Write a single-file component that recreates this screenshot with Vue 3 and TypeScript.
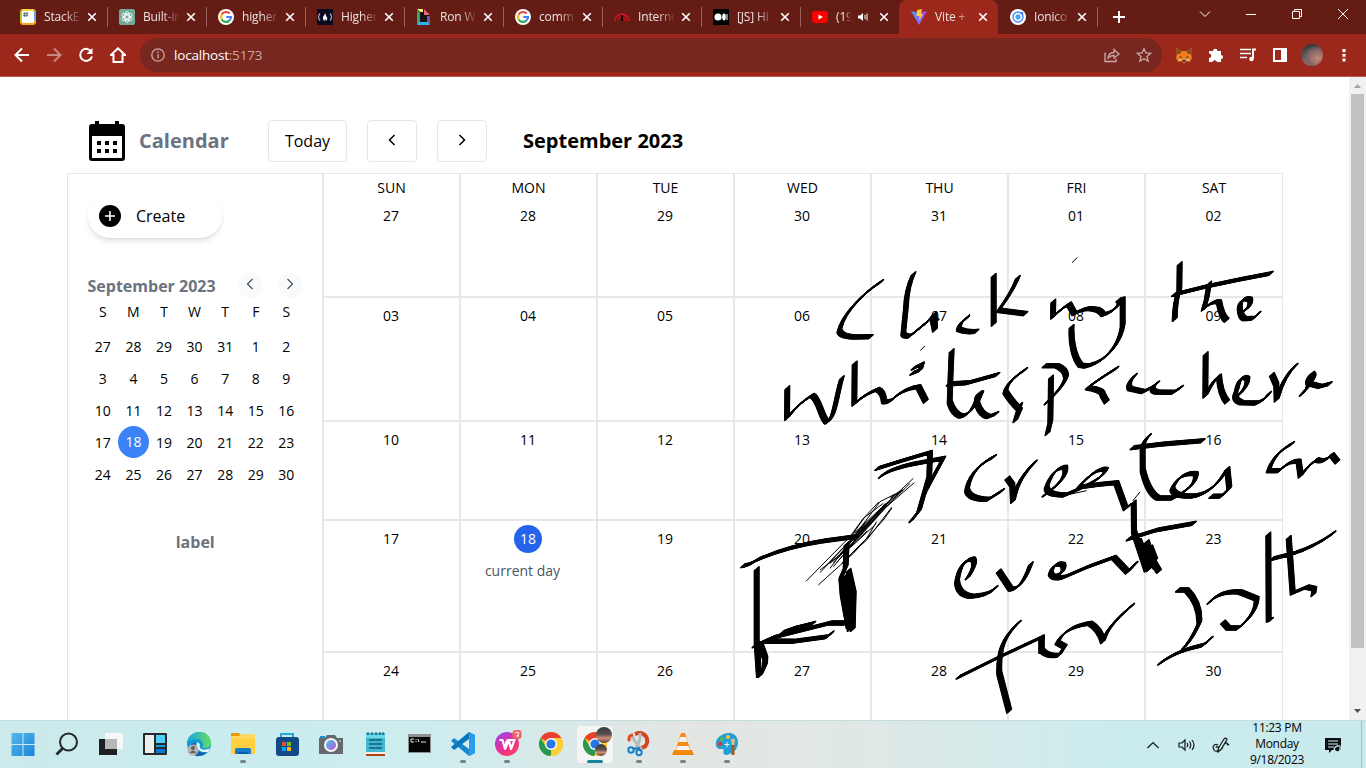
<script setup lang="ts">
interface Tab {
  title: string
  icon: string
  active?: boolean
  audio?: boolean
}

interface InkGroup {
  x: number
  y: number
  broad: string
  fine: string
}

const tabs: Tab[] = [
  { title: 'StackE', icon: 'stack' },
  { title: 'Built-in', icon: 'gpt' },
  { title: 'higher', icon: 'google' },
  { title: 'Higher', icon: 'fcc' },
  { title: 'Ron W', icon: 'ron' },
  { title: 'comm', icon: 'google' },
  { title: 'Interne', icon: 'speed' },
  { title: '[JS] Hi', icon: 'medium' },
  { title: '(19', icon: 'youtube', audio: true },
  { title: 'Vite +', icon: 'vite', active: true },
  { title: 'Ionico', icon: 'ionic' },
]

const weekdays = ['SUN', 'MON', 'TUE', 'WED', 'THU', 'FRI', 'SAT']
const weeks: string[][] = [
  ['27', '28', '29', '30', '31', '01', '02'],
  ['03', '04', '05', '06', '07', '08', '09'],
  ['10', '11', '12', '13', '14', '15', '16'],
  ['17', '18', '19', '20', '21', '22', '23'],
  ['24', '25', '26', '27', '28', '29', '30'],
]
const initials = ['S', 'M', 'T', 'W', 'T', 'F', 'S']
const short = (day: string) => String(Number(day))

// Pen strokes are kept at three units per pixel, relative to each group's origin.
const ink: InkGroup[] = [
  {
    x: 740, y: 240,
    broad: 'M425 124C380 152 310 215 298 272Q302 290 345 291L394 290 M521 100Q500 145 498 200L490 280Q492 290 510 288L566 242L583 222L585 270L578 235L591 245 M683 232Q655 250 657 268Q680 278 711 274 M761 105L761 254 M834 111Q820 150 776 211L858 221 M142 442L141 535Q175 490 216 466C238 475 245 540 262 546C285 535 290 460 306 412 M344 368L343 492Q370 465 412 448Q430 455 432 484Q440 488 455 480Q490 445 535 440L558 485 M519 385L546 372L541 390L515 400 M635 331L632 400L629 486Q640 520 662 528Q690 528 710 480Q712 455 724 459L711 490Q722 525 746 530L771 520 M624 432L685 428L774 403 M857 388Q800 425 796 455Q810 480 840 510L826 542L841 492',
    fine: 'M541 331L555 318 M690 222L665 245',
  },
  {
    x: 1040, y: 240,
    broad: 'M40 182L39 231Q65 205 87 192L103 221Q140 200 165 208Q180 210 190 224Q225 215 240 186L235 180L248 177L248 256C240 310 200 365 140 378L122 376C100 350 92 300 95 258 M419 70L418 150Q405 180 404 240 M400 164L500 139L600 118L694 100 M508 128L500 175L491 207Q520 180 537 186Q545 230 561 242 M612 212Q635 200 630 178Q603 170 599 200Q600 230 614 236L640 235L657 219 M12 377L50 377Q80 390 78 412Q70 440 18 490 M33 410L31 545L22 582 M231 384Q180 415 143 443Q190 450 188 465L201 487 M286 405Q260 430 270 446L310 455Q335 445 352 429Q325 450 350 456L400 457L425 441 M497 340L496 468Q520 420 537 408Q540 460 562 487 M590 470Q625 440 622 416Q600 400 590 450Q576 478 605 488L650 489Q675 480 688 459 M695 402L709 434L710 480Q730 410 768 375 M803 438Q830 410 816 400Q800 415 806 430L840 439L871 431 M805 440L784 464',
    fine: 'M96 68L112 53',
  },
  {
    x: 730, y: 430,
    broad: 'M440 116Q520 90 600 67L598 135L567 243L543 273 M451 140Q480 115 560 100L640 85L588 180 M38 407Q60 405 80 390Q170 350 280 333L375 320 M80 415L80 635L87 738 M350 340L347 410L334 440L338 490L356 590L370 590 M355 420L371 490L368 600M347 435L361 535L359 600 M72 648L130 622L300 579L350 579 M105 633L190 634L292 620L306 608 M155 608L190 595L250 580L180 606 M90 640L106 685L105 705L90 738 M794 79Q720 115 711 180Q718 208 775 208L818 181 M831 143L847 165L849 214Q860 150 916 95 M712 445Q742 400 728 387Q690 390 681 455Q685 495 725 499Q780 495 798 472 M805 422L842 477Q875 480 903 400 M868 576C820 620 805 660 808 730L838 845 M684 742L810 680L936 621L934 666',
    fine: 'M228 454L345 335L550 145 M265 465L370 370L460 270L486 234 M270 428L400 290L553 158 M300 415L450 215L520 180 M345 350L485 215L540 160 M370 310Q400 260 446 216 M335 400L410 325L440 275 M365 330L475 215 M370 335L450 240L518 180 M375 310L480 215 M270 420L350 360L470 225 M290 405L390 300 M300 400L380 330L510 185 M310 410L420 280 M350 385L410 330L485 232 M360 320L400 265L460 220 M640 90L568 230 M378 318L470 222 M382 324L472 226 M372 326L466 220 M360 338L440 262 M352 348L400 296 M330 372L380 318 M310 398L350 350 M320 398L372 338 M350 330L384 320 M345 345L384 322 M480 205L518 180 M484 200L512 184 M362 352L436 284 M340 372L412 302 M322 386L396 308',
  },
  {
    x: 1040, y: 430,
    broad: 'M12 196Q85 145 75 112Q40 112 20 170Q18 195 75 195L110 180Q190 145 198 119Q170 110 115 172L180 163L229 158L257 236L268 226 M328 16Q305 40 308 60L308 120Q325 190 355 204L400 204Q474 165 467 131Q420 125 397 175Q400 200 460 198Q520 190 562 116L568 175L545 198L512 199 M276 53L370 42L490 32 M758 40Q700 70 686 122L718 122Q750 90 776 94L782 138Q800 110 830 89Q850 100 875 74L893 97 M281 215L282 305L320 420L320 335L345 410L322 360L309 350L318 400L345 390L325 420 M296 330L322 395 M330 350L346 392 M310 345L357 424L330 385 M264 327L350 300L463 280 M40 440Q78 430 69 404Q40 395 32 430Q38 448 70 442L145 410L221 382L263 426L288 399 M3 620L5 660Q20 680 57 676L74 650L52 638Q75 590 150 580Q180 598 189 635Q200 590 278 525 M412 480L440 480Q480 520 478 578Q455 630 430 655 M359 700Q400 670 450 655L490 645L514 624 M507 518Q540 480 600 486L650 506Q650 550 595 594L565 594L548 575 M685 311L686 570L695 568 M694 387L760 370Q825 350 882 308 M746 321L758 489L800 471L823 476L820 495',
    fine: 'M300 186L278 213 M70 197L140 182',
  },
]
// The pen tip is a slanted nib: each broad stroke is swept along these offsets.
const nib = Array.from({ length: 15 }, (_, i) => (i - 7) * 0.44)

const running = [5, 10, 11, 14, 15, 16]
const apps = ['start', 'search', 'tasks', 'widgets', 'edge', 'files', 'store', 'camera', 'notepad', 'terminal', 'code', 'wps', 'chrome', 'chrome2', 'snip', 'vlc', 'paint']
</script>

<template>
  <div class="screen">
    <header class="strip">
      <div v-for="(tab, i) in tabs" :key="i" class="tab" :class="{ active: tab.active, before: i === 8 }">
        <svg class="fav" viewBox="0 0 16 16">
          <g v-if="tab.icon === 'stack'">
            <rect width="16" height="16" rx="3" fill="#f5a31a" /><path d="M0 3V12L3 10V3Z" fill="#a7d320" /><path d="M13 2H16V11L13 12Z" fill="#68a9ef" /><path d="M2 0H14L12 3H3Z" fill="#f3d648" />
            <rect x="2" y="2" width="12" height="12" rx="1" fill="#fff" /><path d="M5 3L4.300 8M7.300 3L6.600 8M3 4.600H8.300M2.900 6.600H8" stroke="#555" stroke-width=".8" />
          </g>
          <g v-else-if="tab.icon === 'gpt'">
            <rect width="16" height="16" rx="2" fill="#74aa9c" />
            <g fill="none" stroke="#fff" stroke-width=".8"><ellipse v-for="a in 3" :key="a" cx="8" cy="8" rx="2.600" ry="5.500" :transform="`rotate(${a * 60} 8 8)`" /><circle cx="8" cy="8" r="2" /></g>
          </g>
          <g v-else-if="tab.icon === 'google'">
            <circle cx="8" cy="8" r="8" fill="#fff" />
            <g fill="none" stroke-width="2.200"><path d="M11.700 4.600A5 5 0 0 0 3.700 5.500" stroke="#ea4335" /><path d="M3.700 5.500A5 5 0 0 0 3.700 10.500" stroke="#fbbc05" /><path d="M3.700 10.500A5 5 0 0 0 11.300 11.700" stroke="#34a853" /><path d="M11.300 11.700A5 5 0 0 0 13 8H8.200" stroke="#4285f4" /></g>
          </g>
          <g v-else-if="tab.icon === 'fcc'">
            <rect width="16" height="16" fill="#0a0a23" /><path d="M3 4.500Q0 8 3 11.500M13 4.500Q16 8 13 11.500" fill="none" stroke="#aab" stroke-width="1.200" /><path d="M8 4C8 6.500 5.500 7 6 9.500C6.200 11 7 11.500 7.500 12L8 9.500L9 12C10.500 11 10.500 8.500 9.800 7.500L9.300 8Q9 5.500 8 4Z" fill="#fff" />
          </g>
          <g v-else-if="tab.icon === 'ron'">
            <path d="M1 0H8L14 6V16H1Z" fill="#151515" /><path d="M1 0H7V3H4Z" fill="#fff27a" /><path d="M8 0L14 6H8Z" fill="#f2647c" /><path d="M1 1L4 4V13L1 16Z" fill="#3fa56a" /><path d="M11 7H14V16L11 13Z" fill="#7255a5" /><path d="M1 16L3 13H12L14 16Z" fill="#27b6e8" />
          </g>
          <g v-else-if="tab.icon === 'speed'" fill="none" stroke="#d51620"><path d="M1 12A7 7 0 0 1 15 12" stroke-width="1.600" /><path d="M4 11A4.500 4.500 0 0 1 8 7M8 5.500Q12 6 13 12M8 8Q10 8 11 12" /><path d="M8 6V12" stroke="#240608" stroke-width="2" /></g>
          <g v-else-if="tab.icon === 'medium'"><rect width="16" height="16" fill="#000" /><circle cx="5" cy="8" r="3.600" fill="#fff" /><ellipse cx="11" cy="8" rx="1.800" ry="3.400" fill="#fff" /><path d="M14 5V11" stroke="#fff" /></g>
          <g v-else-if="tab.icon === 'youtube'"><rect y="2" width="16" height="12" rx="3" fill="#f00" /><path d="M6.500 5.500L11 8L6.500 10.500Z" fill="#fff" /></g>
          <g v-else-if="tab.icon === 'vite'"><path d="M0 2L8 16L16 2L8 4Z" fill="url(#vite)" /><path d="M6 1L11 0L10 5L12 5L8 12L8.500 7H5.500Z" fill="#ffcb2d" /></g>
          <g v-else><circle cx="8" cy="8" r="8" fill="#fff" /><circle cx="8" cy="8" r="5" fill="none" stroke="#478aff" stroke-width="1.400" /><circle cx="8" cy="8" r="2.200" fill="#3db2ff" stroke="#3880ff" stroke-width=".8" /><circle cx="12" cy="4.200" r="1.300" fill="#3880ff" /></g>
          <defs><linearGradient id="vite"><stop stop-color="#41a9ff" /><stop offset="1" stop-color="#bd34fe" /></linearGradient></defs>
        </svg>
        <span class="tab-title" :class="{ narrow: tab.audio }">{{ tab.title }}</span>
        <svg v-if="tab.audio" class="audio" viewBox="0 0 12 12"><path d="M1 4.500H3L6 2V10L3 7.500H1Z" fill="#fff" /><path d="M8 4V8M10 2.500V9.500" stroke="#fff" /></svg>
        <svg class="cross" viewBox="0 0 10 10"><path d="M1.200 1.200L8.800 8.800M8.800 1.200L1.200 8.800" stroke="#fff" stroke-width="1.600" /></svg>
      </div>
      <svg class="plus" viewBox="0 0 12 12"><path d="M6 0V12M0 6H12" stroke="#fff" stroke-width="2" /></svg>
      <div class="window-controls">
        <svg viewBox="0 0 12 12"><path d="M1 3.500L6 8.500L11 3.500" /></svg>
        <svg viewBox="0 0 12 12"><path d="M1 6.500H11" /></svg>
        <svg viewBox="0 0 12 12"><path d="M1.500 3.500H8.500V10.500H1.500ZM3.500 3V1.500H10.500V8.500H9" /></svg>
        <svg viewBox="0 0 12 12"><path d="M1 1L11 11M11 1L1 11" /></svg>
      </div>
    </header>

    <div class="toolbar">
      <div class="nav">
        <svg viewBox="0 0 16 16"><path d="M15 8H2M8 1.500L1.500 8L8 14.500" /></svg>
        <svg class="dim" viewBox="0 0 16 16"><path d="M1 8H14M8 1.500L14.500 8L8 14.500" /></svg>
        <svg viewBox="0 0 16 16"><path d="M13.500 5A6 6 0 1 0 14 9.500" /><path d="M14.500 1V7H8.500Z" class="solid" /></svg>
        <svg viewBox="0 0 16 16"><path d="M1 8L8 1.300L15 8H12.500V15H3.500V8Z" /></svg>
      </div>
      <div class="omnibox">
        <svg class="info" viewBox="0 0 14 14"><circle cx="7" cy="7" r="6.200" /><path d="M7 6V10.500M7 3.300V4.900" /></svg>
        <span class="url">localhost<i>:5173</i></span>
        <svg class="share" viewBox="0 0 16 16"><path d="M2 6.500H1V14.500H12V11.500M4 11C4.500 7 7 5.500 10 5.500V2.500L15 7L10 11V8.500C7 8.500 5.500 9.500 4 11Z" /></svg>
        <svg class="star" viewBox="0 0 16 16"><path d="M8 1.700L9.900 6L14.600 6.400L11 9.500L12.100 14.200L8 11.700L3.900 14.200L5 9.500L1.400 6.400L6.100 6Z" /></svg>
      </div>
      <div class="extensions">
        <svg viewBox="0 0 16 16"><path d="M0 1L6 4H10L16 1L15 7L16 11L14 15L10 14L9 16H7L6 14L2 15L0 11L1 7Z" fill="#ef7d1a" /><path d="M0 1L6 4L4 7L1 7ZM16 1L10 4L12 7L15 7Z" fill="#87501c" /><path d="M3 9L6 10L5 11ZM13 9L10 10L11 11ZM6.500 13H9.500L9 15H7Z" fill="#25384a" /><path d="M2 12L6 12L6 14L3 14ZM14 12H10V14H13Z" fill="#d9b08c" /></svg>
        <svg viewBox="0 0 16 16"><path d="M1 4H5A2.200 2.200 0 1 1 9.500 4H13V8A2 2 0 1 1 13 12V15H9A2.300 2.300 0 0 0 4.500 15H1V11A2.200 2.200 0 0 0 1 6.500Z" fill="#fff" /></svg>
        <svg viewBox="0 0 16 16"><path d="M0 2.500H11M0 6.500H11M0 10.500H7" stroke="#fff" stroke-width="1.600" /><path d="M13 11.500V2.500H16" fill="none" stroke="#fff" stroke-width="2" /><circle cx="11.500" cy="12" r="2.300" fill="#fff" /></svg>
        <svg viewBox="0 0 16 16"><path d="M2 2H14V14H2Z" fill="none" stroke="#fff" stroke-width="2" /><path d="M9 2H14V14H9Z" fill="#fff" /></svg>
        <span class="avatar"></span>
        <svg viewBox="0 0 16 16"><path d="M6.500 2H9.500V5H6.500ZM6.500 6.700H9.500V9.700H6.500ZM6.500 11.500H9.500V14.500H6.500Z" fill="#fff" /></svg>
      </div>
    </div>

    <main class="viewport">
      <div class="page">
        <div class="page-head">
          <svg class="logo" viewBox="0 0 36 40"><path d="M6 0H10V3H26V0H30V3H33Q36 3 36 6V37Q36 40 33 40H3Q0 40 0 37V6Q0 3 3 3H6Z" /><path d="M3 15H33V37H3Z" fill="#fff" /><path d="M8 20H12V24H8ZM16 20H20V24H16ZM24 20H28V24H24ZM8 28H12V32H8ZM16 28H20V32H16ZM24 28H28V32H24Z" /></svg>
          <h1>Calendar</h1>
          <button class="today">Today</button>
          <button class="step"><svg viewBox="0 0 12 12"><path d="M8.500 1L3.500 6L8.500 11" /></svg></button>
          <button class="step"><svg viewBox="0 0 12 12"><path d="M3.500 1L8.500 6L3.500 11" /></svg></button>
          <h2>September 2023</h2>
        </div>
        <div class="board">
          <aside>
            <button class="create"><svg viewBox="0 0 24 24"><circle cx="12" cy="12" r="12" /><path d="M12 6.500V17.500M6.500 12H17.500" stroke="#fff" stroke-width="1.700" /></svg><span>Create</span></button>
            <div class="mini-head">
              <b>September 2023</b>
              <span class="round"><svg viewBox="0 0 12 12"><path d="M8.500 1L3.500 6L8.500 11" /></svg></span>
              <span class="round"><svg viewBox="0 0 12 12"><path d="M3.500 1L8.500 6L3.500 11" /></svg></span>
            </div>
            <div class="mini initials"><span v-for="(d, i) in initials" :key="i">{{ d }}</span></div>
            <div v-for="(week, w) in weeks" :key="w" class="mini">
              <span v-for="(d, i) in week" :key="i" :class="{ current: w === 3 && i === 1 }">{{ short(d) }}</span>
            </div>
            <p class="label">label</p>
          </aside>
          <section class="month">
            <template v-for="(week, w) in weeks" :key="w">
              <div v-for="(d, i) in week" :key="i" class="day">
                <span v-if="w === 0" class="weekday">{{ weekdays[i] }}</span>
                <span class="date" :class="{ current: w === 3 && i === 1 }">{{ d }}</span>
                <span v-if="w === 3 && i === 1" class="event">current day</span>
              </div>
            </template>
          </section>
        </div>
      </div>
      <div class="scrollbar">
        <svg viewBox="0 0 17 17"><path d="M5 11H12L8.500 7Z" fill="#a3a3a3" /></svg>
        <span class="thumb"></span>
        <svg viewBox="0 0 17 17"><path d="M5 6H12L8.500 10Z" fill="#505050" /></svg>
      </div>
    </main>

    <footer class="taskbar">
      <div class="apps">
        <div v-for="(app, i) in apps" :key="app" class="app" :class="{ focused: i === 13, running: running.includes(i) }">
          <svg viewBox="0 0 24 24">
            <g v-if="app === 'start'" fill="url(#win)"><path d="M.5 1H11.500V12H.5ZM12.500 1H23.500V12H12.500ZM.5 13H11.500V24H.5ZM12.500 13H23.500V24H12.500Z" /></g>
            <g v-else-if="app === 'search'" fill="none" stroke="#252a2b" stroke-width="2"><circle cx="13.500" cy="10" r="8.500" /><path d="M7.500 16.500L1.500 22.500" stroke-width="2.800" /></g>
            <g v-else-if="app === 'tasks'"><path d="M0 7H18V23H0Z" fill="#202020" /><path d="M6 1H24V17H6Z" fill="#f7f7f7" /><path d="M6 7H18V17H6Z" fill="#b6b8b8" /></g>
            <g v-else-if="app === 'widgets'"><rect y="1" width="24" height="22" rx="1" fill="#292929" /><path d="M2 3H11V21H2Z" fill="#eee" /><path d="M13 3H22V11H13Z" fill="#4ed2fa" /><path d="M13 13H22V15H13Z" fill="#189adb" /><path d="M13 17H22V21H13Z" fill="#0877da" /></g>
            <g v-else-if="app === 'edge'"><circle cx="12" cy="12" r="12" fill="#1598d5" /><path d="M0 11C2-2 22-5 24 10C24 17 17 17 15 15C18 12 14 7 10 7C5 7 2 10 0 11Z" fill="url(#edge)" /><path d="M9 10C5 18 14 23 21 19Q16 25 9 24C1 21 1 12 9 10Z" fill="#1260ad" /><path d="M13 12C11 18 18 19 23 16L21 20C13 21 8 17 10 10Z" fill="#e2f7f7" /><circle cx="6" cy="18" r="5.500" fill="#b7b2ad" /><circle cx="6" cy="16" r="2" fill="#625b57" /><path d="M2.500 21Q6 16 9.500 21Z" fill="#625b57" /></g>
            <g v-else-if="app === 'files'"><path d="M0 1H8L10 4H0Z" fill="#e49b00" /><rect y="4" width="24" height="18" rx="1" fill="#ffcf3e" /><path d="M0 4H8L10 2H23Q24 2 24 4V7H0Z" fill="#ffd75e" /><path d="M4 22V18Q4 16 6 16H18Q20 16 20 18V22Z" fill="#147cc9" /><path d="M7 20H17V22H7Z" fill="#0a5da5" /></g>
            <g v-else-if="app === 'store'"><path d="M6 6V2H18V6" fill="none" stroke="#20a9e6" stroke-width="2" /><rect x="1" y="5" width="23" height="19" rx="3" fill="#124a88" /><path d="M7 10H11V14H7Z" fill="#f25022" /><path d="M12 10H16V14H12Z" fill="#7fba00" /><path d="M7 15H11V19H7Z" fill="#00a4ef" /><path d="M12 15H16V19H12Z" fill="#ffb900" /></g>
            <g v-else-if="app === 'camera'"><path d="M1 4H6V7H1Z" fill="#1492d4" /><path d="M0 6H6L8 3H16L18 6H24V22H0Z" fill="#65696d" /><circle cx="12" cy="13" r="7" fill="#f4f5f7" /><circle cx="12" cy="13" r="5" fill="url(#lens)" /><circle cx="21" cy="9" r="1" fill="#bbb" /></g>
            <g v-else-if="app === 'notepad'"><path d="M3 1H22V21H3Z" fill="#42b6cf" /><path d="M3 3H22V6H3Z" fill="#6adaeb" /><path d="M5 0V3M9 0V3M13 0V3M17 0V3M20 0V3" stroke="#1a5a73" stroke-width="1.200" /><path d="M6 8H19M6 12H19M6 16H19" stroke="#125e7d" stroke-width="1.500" /><path d="M3 20H22V22H3Z" fill="#f5eee4" /><path d="M3 22H22V24H3Z" fill="#a84813" /></g>
            <g v-else-if="app === 'terminal'"><path d="M1 2H24V21H1Z" fill="#8c9192" /><path d="M2 5H23V20H2Z" fill="#050505" /><path d="M7 7H4V10H7M9 7V8M9 9V10M11 7L12 10M14 10H19" fill="none" stroke="#e5e5e5" /></g>
            <g v-else-if="app === 'code'"><path d="M18 0L24 3V21L18 24L0 9L3 6L18 17Z" fill="#1687cf" /><path d="M18 0L0 15L3 18L18 7Z" fill="#0878be" /><path d="M18 0L24 3V21L18 24Z" fill="#279cec" /></g>
            <g v-else-if="app === 'wps'"><circle cx="12" cy="12" r="12" fill="url(#wps)" /><path d="M4.500 8H7.500L10 17L14 8.500L16 17L19.500 8H12.500L10 13" fill="none" stroke="#fff" stroke-width="2.200" stroke-linejoin="round" /><rect x="17.500" y="-2" width="9" height="9" rx="3" fill="#ee6466" /><path d="M20 1Q22 -1 24 1Q24 3 21.500 4H24" fill="none" stroke="#fff" /></g>
            <g v-else-if="app === 'chrome' || app === 'chrome2'"><circle cx="12" cy="12" r="12" fill="#fcc62c" /><path d="M12 12L1.600 6A12 12 0 0 1 22.400 6H12Z" fill="#e94031" /><path d="M1.600 6L7 15L12 17L12 24A12 12 0 0 1 1.600 6Z" fill="#299850" /><path d="M16 16L11 24A12 12 0 0 0 22.500 6H12Z" fill="#ffcd36" /><circle cx="12" cy="12" r="6" fill="#fff" /><circle cx="12" cy="12" r="4.600" fill="#2777e8" /><g v-if="app === 'chrome2'"><circle cx="21" cy="3" r="8" fill="url(#dusk)" /><circle cx="18" cy="18" r="6" fill="url(#dusk)" /></g></g>
            <g v-else-if="app === 'snip'"><path d="M8 2C22-3 24 15 14 16" fill="none" stroke="#d34620" stroke-width="4" /><path d="M5 3C6 8 9 11 15 18M13 1C14 8 12 12 8 17" stroke="#b4babd" stroke-width="3" fill="none" /><path d="M6 3C2 3 1 7 3 9" stroke="#e04b20" stroke-width="3" fill="none" /><g fill="none" stroke="#1680cd" stroke-width="2"><circle cx="4" cy="18" r="2.700" /><circle cx="12" cy="20.500" r="2.700" /><path d="M6 17L13 16" /></g></g>
            <g v-else-if="app === 'vlc'"><path d="M3 18H21L23 23H1Z" fill="#ef8500" /><path d="M10 1H14L20 20Q12 23 4 20Z" fill="#f68b13" /><path d="M9 5H15L16.500 10H7.500ZM6.500 14H17.500L19 18H5Z" fill="#f4f2ed" /></g>
            <g v-else><path d="M1 14C-1 6 8 0 16 1C26 4 24 17 18 20C13 23 11 24 9 22C7 20 10 18 8 17C5 17 3 18 1 14Z" fill="#229fd9" /><circle cx="5" cy="12" r="2.200" fill="#dd3b2d" /><circle cx="7" cy="7" r="2" fill="#62b747" /><circle cx="13" cy="5" r="2" fill="#ffc328" /><path d="M12 10V15M9.500 12.500H14.500" stroke="#e5f6fb" /><path d="M16 7H20L19 14H17Z" fill="#e6bd82" /><path d="M18 13V23" stroke="#9b5c27" stroke-width="3" /></g>
            <defs>
              <linearGradient id="win" x2="1" y2="1"><stop stop-color="#55b9ed" /><stop offset="1" stop-color="#1985d7" /></linearGradient><linearGradient id="edge"><stop stop-color="#16a7df" /><stop offset="1" stop-color="#68dc62" /></linearGradient><linearGradient id="lens" x2="1" y2="1"><stop stop-color="#42c9ed" /><stop offset="1" stop-color="#c054d9" /></linearGradient><linearGradient id="wps" x2=".7" y2="1"><stop stop-color="#8a4bff" /><stop offset=".6" stop-color="#ed2d93" /><stop offset="1" stop-color="#fa4265" /></linearGradient><linearGradient id="dusk" x2="0" y2="1"><stop stop-color="#3b3b40" /><stop offset=".45" stop-color="#594e50" /><stop offset=".7" stop-color="#d18d73" /><stop offset="1" stop-color="#534348" /></linearGradient>
            </defs>
          </svg>
        </div>
      </div>
      <div class="tray">
        <svg viewBox="0 0 18 18"><path d="M3.500 12L9 6.500L14.500 12" /></svg>
        <svg viewBox="0 0 18 18"><path d="M1 7H4L7 4V14L4 11H1ZM9 7Q10.500 9 9 11M11.500 5.500Q14 9 11.500 12.500M14 4Q18 9 14 14" /></svg>
        <svg viewBox="0 0 18 18"><path d="M6 9C2 7 0 11 2 14C4 17 8 14 6 11C5 10 4 11 4 12M6 15L6.500 12L12 3Q14 1 15 3.500L9 13.500L6 16ZM10 13C11 8 15 5 15.500 8Q15 10 17 8" /></svg>
        <div class="clock"><span>11:23 PM</span><span>Monday</span><span>9/18/2023</span></div>
        <svg class="notice" viewBox="0 0 18 18"><path d="M1 2H17V14H8L5 17V14H1Z" fill="#0c1011" stroke="none" /><path d="M4 5H14M4 8H14M4 11H10" stroke="#d1edef" /><path d="M10 14Q11 9 16 10Q17 16 13 16Z" fill="#0c1011" stroke="#d1edef" /></svg>
        <span class="peek"></span>
      </div>
    </footer>

    <svg class="ink" viewBox="0 0 1366 768">
      <g v-for="(group, i) in ink" :key="i" :transform="`translate(${group.x} ${group.y}) scale(.33333)`">
        <path v-for="n in nib" :key="n" :d="group.broad" :transform="`translate(${n * 2.3} ${n * -2})`" />
        <path class="fine" :d="group.fine" />
      </g>
    </svg>
  </div>
</template>

<style>
body { margin: 0; overflow: hidden; }
</style>

<style scoped>
* { box-sizing: border-box; }
.screen { position: relative; width: 1366px; height: 768px; overflow: hidden; display: flex; flex-direction: column; background: #fff; color: #000; font-family: "Open Sans", "Noto Sans", sans-serif; }
svg { display: block; flex: none; }
.strip { height: 34px; flex: none; display: flex; align-items: center; background: #641c15; padding-left: 8px; font: 12px/16px "Open Sans", sans-serif; color: #eee2e0; letter-spacing: -.15px; }
.tab { position: relative; width: 99px; height: 34px; display: flex; align-items: center; padding: 0 9px 0 12px; }
.tab::after { content: ""; position: absolute; right: -1px; top: 7px; width: 1px; height: 20px; background: #98615c; }
.tab.active { background: #9c281c; border-radius: 8px 8px 0 0; padding-right: 9px; }
.tab.active::after, .tab.before::after { display: none; }
.fav { width: 16px; height: 16px; }
.tab-title { width: 44px; margin-left: 8px; margin-right: -8px; white-space: nowrap; mask-image: linear-gradient(90deg, #000 45%, transparent 85%); }
.tab-title.narrow { width: 18px; margin-right: -4px; }
.audio { width: 12px; height: 12px; margin-left: 7px; }
.cross { width: 10px; height: 10px; margin-left: auto; margin-right: 1px; }
.plus { width: 12px; height: 12px; margin-left: 16px; }
.window-controls { margin-left: auto; display: flex; gap: 34px; margin-right: 17px; height: 28px; align-items: center; align-self: flex-start; }
.window-controls svg { width: 12px; height: 12px; fill: none; stroke: #fff; }
.toolbar { height: 43px; flex: none; display: flex; align-items: center; background: #9c281c; border-bottom: 1px solid #bb5a50; }
.nav { display: flex; gap: 16px; margin-left: 14px; }
.nav svg { width: 16px; height: 16px; fill: none; stroke: #fff; stroke-width: 2; }
.nav .dim { opacity: .45; }
.nav .solid { fill: #fff; stroke: none; }
.omnibox { width: 1022px; height: 34px; margin-left: 14px; border-radius: 17px; background: #77271f; display: flex; align-items: center; padding: 0 10px 0 11px; font: 13.500px/18px "Open Sans", sans-serif; color: #fff; }
.omnibox svg { fill: none; stroke: #c9aaa7; stroke-width: 1.300; }
.info { width: 14px; height: 14px; }
.url { margin-left: 9px; letter-spacing: -.2px; }
.url i { font-style: normal; color: #c8a5a1; }
.share { width: 16px; height: 16px; margin-left: auto; }
.star { width: 16px; height: 16px; margin-left: 16px; }
.extensions { display: flex; align-items: center; gap: 16px; margin-left: 14px; }
.extensions svg { width: 16px; height: 16px; }
.avatar { width: 22px; height: 22px; margin: 0 -3px; border-radius: 50%; background: radial-gradient(ellipse at 75% 65%, #c78a77, #7c6262 45%, transparent 65%), linear-gradient(#353638, #63585b 65%, #a18a88); }
.viewport { height: 643px; flex: none; display: flex; overflow: hidden; }
.page { width: 1349px; padding: 43px 66px 0 67px; overflow: hidden; }
.page-head { height: 53px; display: flex; align-items: flex-start; padding-left: 22px; }
.logo { width: 36px; height: 40px; margin-top: 1px; }
h1, h2 { margin: 0; font-size: 20px; line-height: 28px; padding-top: 7px; }
h1 { color: #6b7280; margin-left: 14px; width: 129px; font-weight: 700; }
h2 { margin-left: 36px; font-weight: 700; white-space: nowrap; }
button { font-family: inherit; color: #000; background: #fff; padding: 0; }
.today, .step { height: 42px; border: 1px solid #e5e7eb; border-radius: 4px; font-size: 16px; line-height: 24px; }
.today { width: 79px; }
.step { width: 50px; margin-left: 20px; display: flex; justify-content: center; padding-top: 13px; }
.step svg { width: 12px; height: 12px; fill: none; stroke: #000; stroke-width: 1.500; }
.board { height: 700px; display: grid; grid-template-columns: 256px 960px; }
aside { border: 1px solid #e5e7eb; padding: 20px 19px 20px 19.500px; }
.create { width: 134px; height: 44px; display: flex; align-items: center; border: 0; border-radius: 22px; box-shadow: 0 4px 6px -1px #0000001a, 0 2px 4px -2px #0000001a; padding-left: 11.500px; font-size: 16px; }
.create svg { width: 22px; height: 22px; }
.create span { margin-left: 15px; }
.mini-head { margin-top: 35px; height: 25px; display: flex; color: #6b7280; font-size: 16px; line-height: 26px; }
.mini-head b { width: 150px; flex: none; white-space: nowrap; }
.round { width: 25px; height: 25px; border-radius: 50%; background: #f9fafb; padding: 5px 6px; margin-right: 15px; flex: none; }
.round svg { width: 12px; height: 12px; fill: none; stroke: #4b5563; stroke-width: 1.300; }
.mini { display: grid; grid-template-columns: repeat(7, 30.600px); height: 32px; font-size: 14px; line-height: 32px; text-align: center; }
.mini.initials { height: 33px; line-height: 28px; }
.mini .current { color: #fff; background: #3b82f6; border-radius: 50%; height: 32px; margin-top: -1px; width: 31px; }
.label { margin: 39px 0 0; text-align: center; color: #6b7280; font-size: 16px; line-height: 24px; font-weight: 700; }
.month { display: grid; grid-template-columns: repeat(6, 137px) 138px; grid-template-rows: 124px 124px 99px 132px 132px; font-size: 14px; line-height: 20px; }
.day { border: 1px solid #e5e7eb; padding-top: 8px; display: flex; flex-direction: column; align-items: center; }
.weekday { margin: -4px 0 8px; }
.date { margin-right: 1px; }
.date.current { width: 28px; height: 28px; line-height: 28px; margin-top: -4px; border-radius: 50%; background: #2563eb; color: #fff; text-align: center; }
.event { color: #4b5563; margin: 8px 12px 0 0; }
.scrollbar { width: 17px; background: #f1f1f1; display: flex; flex-direction: column; align-items: center; }
.scrollbar svg { width: 17px; height: 17px; }
.thumb { width: 13px; height: 554px; background: #c1c1c1; margin-bottom: auto; }
.taskbar { height: 48px; flex: none; display: flex; justify-content: space-between; background: linear-gradient(90deg, #cce9eb 0, #c9ecee 15%, #ceecee 32%, #e3e6e3 50%, #dfe8e6 64%, #caecee 82%, #c9eaec); border-top: 1px solid #c5dcde; }
.apps { display: flex; padding-left: 1px; }
.app { position: relative; width: 44px; height: 47px; display: flex; align-items: center; justify-content: center; padding-bottom: 2px; }
.app svg { position: relative; width: 24px; height: 24px; overflow: visible; }
.app.running::after, .app.focused::after { content: ""; position: absolute; bottom: 5px; left: 19px; width: 6px; height: 3px; border-radius: 2px; background: #748486; }
.app.focused::before { content: ""; position: absolute; inset: 4px 3px; border-radius: 4px; background: #f3f6f5; border: 1px solid #dce4e2; }
.app.focused::after { width: 16px; left: 14px; background: #16849b; }
.tray { display: flex; align-items: center; font: 12px/16px "Open Sans", sans-serif; letter-spacing: -.3px; }
.tray svg { width: 18px; height: 18px; margin-right: 16px; fill: none; stroke: #15191a; stroke-width: 1.200; }
.clock { width: 66px; display: flex; flex-direction: column; text-align: center; margin: 0 14px 1px -2px; }
.tray .notice { margin-right: 19px; }
.peek { width: 5px; height: 48px; border-left: 1px solid #9cc2c5; }
.ink { position: absolute; inset: 0; width: 1366px; height: 768px; pointer-events: none; }
.ink path { fill: none; stroke: #000; stroke-width: 4; stroke-linejoin: round; }
.ink .fine { stroke-width: 3; }
</style>
